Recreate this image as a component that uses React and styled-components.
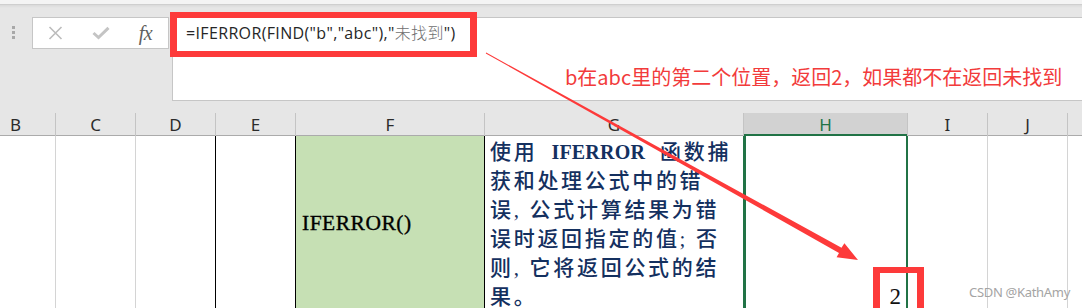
import React from 'react';
import styled, { createGlobalStyle } from 'styled-components';

const RED = '#fd3a3a';
const GREEN = '#217346';

const GlobalStyle = createGlobalStyle`
  html, body { margin: 0; padding: 0; background: #e6e6e6; }
  body { overflow: hidden; }
`;

const Page = styled.div`
  position: relative;
  width: 1082px;
  height: 308px;
  overflow: hidden;
  display: flex;
  flex-direction: column;
  background: #e6e6e6;
  font-family: "Noto Sans", "Noto Sans CJK SC", sans-serif;
`;

const TopStrip = styled.div`
  flex: none;
  height: 4px;
  background: #f4f4f4;
  border-bottom: 1px solid #cfcfcf;
`;

const FormulaArea = styled.div`
  flex: none;
  height: 108px;
  box-sizing: border-box;
  padding-top: 12px;
  display: flex;
  align-items: flex-start;
  background: linear-gradient(#dadada, #e6e6e6 3px);
`;

const Handle = styled.div`
  flex: none;
  width: 32px;
  box-sizing: border-box;
  padding: 9px 0 0 12px;
  display: flex;
  flex-direction: column;
  gap: 2px;
`;

const Dot = styled.span`
  width: 3px;
  height: 3px;
  background: #a8a8a8;
`;

const ToolBox = styled.div`
  flex: none;
  width: 137px;
  height: 32px;
  box-sizing: border-box;
  border: 1px solid #c6c6c6;
  background: #fff;
  display: flex;
`;

const ToolSlot = styled.div`
  width: 45px;
  display: flex;
  align-items: center;
  justify-content: center;
`;

const Fx = styled.span`
  font-family: "Liberation Serif", serif;
  font-style: italic;
  font-size: 20px;
  line-height: 20px;
  color: #5f5f5f;
  letter-spacing: -0.5px;
`;

const FormulaInput = styled.div`
  flex: 1;
  margin-left: 3px;
  height: 84px;
  box-sizing: border-box;
  border: 1px solid #c6c6c6;
  border-right: none;
  background: #fff;
  padding: 5px 0 0 13px;
  font-family: "Open Sans", "Noto Sans CJK SC", sans-serif;
  font-size: 16px;
  line-height: 20px;
  letter-spacing: 0.35px;
  color: #262626;
  white-space: pre;
`;

const FormulaCjk = styled.span`
  color: #6e6e6e;
  font-weight: 300;
`;

const Sheet = styled.div`
  margin-left: -24px;
  display: flex;
  flex-direction: column;
`;

const HeaderRow = styled.div`
  display: flex;
  height: 23px;
  flex: none;
`;

const HeaderCell = styled.div`
  flex: none;
  width: ${(p) => p.$w}px;
  box-sizing: border-box;
  border-right: 1px solid #c4c4c4;
  display: flex;
  align-items: center;
  justify-content: center;
  padding-bottom: 1px;
  font-size: 17px;
  color: ${(p) => (p.$sel ? GREEN : '#2b2b2b')};
  background: ${(p) => (p.$sel ? '#d2d2d2' : 'transparent')};
  box-shadow: inset 0 ${(p) => (p.$sel ? -2 : -1)}px 0 ${(p) => (p.$sel ? GREEN : '#ababab')};
`;

const CellRow = styled.div`
  display: flex;
  height: 172px;
  flex: none;
  background: #fff;
`;

const Cell = styled.div`
  flex: none;
  width: ${(p) => p.$w}px;
  box-sizing: border-box;
  border-right: 1px solid ${(p) => p.$line};
  background: ${(p) => p.$fill};
  display: flex;
  ${(p) => p.$sel && `box-shadow: inset 2px 0 0 ${GREEN}, inset -1px 0 0 ${GREEN};`}
`;

const FuncCell = styled(Cell)`
  align-items: center;
  padding: 3px 0 0 6px;
`;

const FuncName = styled.span`
  font-family: "Liberation Serif", serif;
  font-size: 21.5px;
  color: #000;
  letter-spacing: 0.5px;
  -webkit-text-stroke: 0.35px #000;
`;

const Desc = styled.div`
  padding: 2px 0 0 5px;
  font-family: "Liberation Serif", "Noto Sans CJK SC", serif;
  font-size: 21px;
  line-height: 29px;
  letter-spacing: 2.7px;
  font-weight: 500;
  color: #14305f;
  white-space: pre;
  overflow: hidden;
`;

const DescLine = styled.div``;

const Latin = styled.span`
  font-size: 20px;
  font-weight: 700;
  letter-spacing: 0.2px;
  margin: 0 15px 0 14px;
`;

const ValueCell = styled(Cell)`
  align-items: flex-end;
  justify-content: flex-end;
  padding: 0 6px 0 0;
`;

const Value = styled.span`
  font-family: "Liberation Serif", serif;
  font-size: 23px;
  line-height: 23px;
  color: #111;
`;

const RedFrame = styled.div`
  position: absolute;
  left: ${(p) => p.$x}px;
  top: ${(p) => p.$y}px;
  width: ${(p) => p.$w}px;
  height: ${(p) => p.$h}px;
  box-sizing: border-box;
  border: 6px solid ${RED};
  border-left-width: 7px;
  border-right-width: 7px;
`;

const Note = styled.div`
  position: absolute;
  left: 565px;
  top: 66px;
  font-family: "Noto Sans CJK SC", sans-serif;
  font-size: 20px;
  line-height: 22px;
  color: #f23b3b;
  white-space: nowrap;
`;

const Watermark = styled.div`
  position: absolute;
  left: 969px;
  top: 284px;
  font-family: "Noto Sans", sans-serif;
  font-size: 13px;
  line-height: 17px;
  letter-spacing: -0.3px;
  color: #a4a4a4;
  white-space: nowrap;
`;

const ArrowLayer = styled.svg`
  position: absolute;
  left: 0;
  top: 0;
  width: 1082px;
  height: 308px;
  pointer-events: none;
`;

const columns = [
  { id: 'B', w: 80, line: '#d4d4d4' },
  { id: 'C', w: 80, line: '#d4d4d4' },
  { id: 'D', w: 80, line: '#000' },
  { id: 'E', w: 80, line: '#000' },
  { id: 'F', w: 189, line: '#000', fill: '#c6e0b4' },
  { id: 'G', w: 259, line: GREEN },
  { id: 'H', w: 164, line: GREEN, sel: true },
  { id: 'I', w: 80, line: '#d4d4d4' },
  { id: 'J', w: 80, line: '#d4d4d4' },
  { id: 'K', w: 100, line: '#d4d4d4' },
];

function renderCell(c) {
  const common = { key: c.id, $w: c.w, $line: c.line, $fill: c.fill || '#fff', $sel: c.sel };
  if (c.id === 'F') {
    return (
      <FuncCell {...common}>
        <FuncName>IFERROR()</FuncName>
      </FuncCell>
    );
  }
  if (c.id === 'G') {
    return (
      <Cell {...common}>
        <Desc>
          <DescLine>
            使用<Latin>IFERROR</Latin>函数捕
          </DescLine>
          <DescLine>获和处理公式中的错</DescLine>
          <DescLine>误, 公式计算结果为错</DescLine>
          <DescLine>误时返回指定的值; 否</DescLine>
          <DescLine>则, 它将返回公式的结</DescLine>
          <DescLine>果。</DescLine>
        </Desc>
      </Cell>
    );
  }
  if (c.id === 'H') {
    return (
      <ValueCell {...common}>
        <Value>2</Value>
      </ValueCell>
    );
  }
  return <Cell {...common} />;
}

export default function App() {
  return (
    <>
      <GlobalStyle />
      <Page>
        <TopStrip />
        <FormulaArea>
          <Handle>
            <Dot />
            <Dot />
            <Dot />
          </Handle>
          <ToolBox>
            <ToolSlot>
              <svg width="15" height="14" viewBox="0 0 15 14">
                <path d="M1.5 1L13.5 13M13.5 1L1.5 13" stroke="#bcbcbc" strokeWidth="1.6" fill="none" />
              </svg>
            </ToolSlot>
            <ToolSlot>
              <svg width="18" height="14" viewBox="0 0 18 14">
                <path d="M1.5 7L6.5 11.5L16.5 1.8" stroke="#c4c4c4" strokeWidth="3" fill="none" />
              </svg>
            </ToolSlot>
            <ToolSlot>
              <Fx>fx</Fx>
            </ToolSlot>
          </ToolBox>
          <FormulaInput>
            {'=IFERROR(FIND("b","abc"),"'}
            <FormulaCjk>未找到</FormulaCjk>
            {'")'}
          </FormulaInput>
        </FormulaArea>
        <Sheet>
          <HeaderRow>
            {columns.map((c) => (
              <HeaderCell key={c.id} $w={c.w} $sel={c.sel}>
                {c.id === 'K' ? '' : c.id}
              </HeaderCell>
            ))}
          </HeaderRow>
          <CellRow>{columns.map(renderCell)}</CellRow>
        </Sheet>

        <RedFrame $x={170} $y={12} $w={307} $h={45} />
        <RedFrame $x={873} $y={267} $w={51} $h={60} />
        <Note>b在abc里的第二个位置，返回2，如果都不在返回未找到</Note>
        <Watermark>CSDN @KathAmy</Watermark>
        <ArrowLayer viewBox="0 0 1082 308">
          <polygon
            points="486.2,52.6 841.5,247.7 844.4,243.3 858,260 836.6,257.3 839,252.9 485.8,53.4"
            fill={RED}
          />
        </ArrowLayer>
      </Page>
    </>
  );
}
